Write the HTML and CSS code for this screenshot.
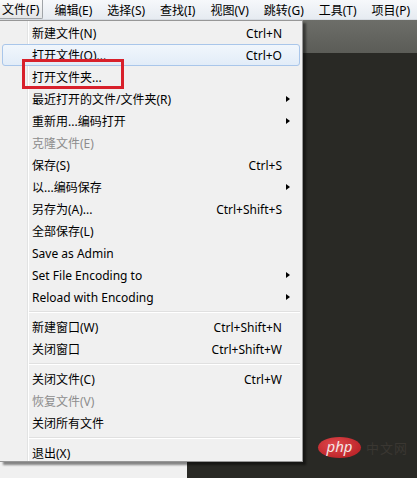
FILE: index.html
```html
<!DOCTYPE html>
<html>
<head>
    <title>文件菜单</title>
    <link rel="stylesheet" href="styles.css">
</head>
<body>
    <div class="menubar">
        <span class="menu-title active">文件(F)</span>
        <span class="menu-title">编辑(E)</span>
        <span class="menu-title">选择(S)</span>
        <span class="menu-title">查找(I)</span>
        <span class="menu-title">视图(V)</span>
        <span class="menu-title">跳转(G)</span>
        <span class="menu-title">工具(T)</span>
        <span class="menu-title">项目(P)</span>
    </div>

    <div class="workspace">
        <div class="sidebar"></div>
        <div class="editor">
            <div class="tabbar"></div>
            <div class="watermark">
                <span class="php-logo">php</span>
                <span class="php-site">中文网</span>
            </div>
        </div>
    </div>

    <div class="dropdown">
        <div class="item"><span class="label">新建文件(N)</span><span class="keys">Ctrl+N</span></div>
        <div class="item hover"><span class="label">打开文件(O)...</span><span class="keys">Ctrl+O</span></div>
        <div class="item"><span class="label">打开文件夹...</span></div>
        <div class="item sub"><span class="label">最近打开的文件/文件夹(R)</span></div>
        <div class="item sub"><span class="label">重新用...编码打开</span></div>
        <div class="item disabled"><span class="label">克隆文件(E)</span></div>
        <div class="item"><span class="label">保存(S)</span><span class="keys">Ctrl+S</span></div>
        <div class="item sub"><span class="label">以...编码保存</span></div>
        <div class="item"><span class="label">另存为(A)...</span><span class="keys">Ctrl+Shift+S</span></div>
        <div class="item"><span class="label">全部保存(L)</span></div>
        <div class="item"><span class="label">Save as Admin</span></div>
        <div class="item sub"><span class="label">Set File Encoding to</span></div>
        <div class="item sub"><span class="label">Reload with Encoding</span></div>
        <div class="separator"></div>
        <div class="item"><span class="label">新建窗口(W)</span><span class="keys">Ctrl+Shift+N</span></div>
        <div class="item"><span class="label">关闭窗口</span><span class="keys">Ctrl+Shift+W</span></div>
        <div class="separator"></div>
        <div class="item"><span class="label">关闭文件(C)</span><span class="keys">Ctrl+W</span></div>
        <div class="item disabled"><span class="label">恢复文件(V)</span></div>
        <div class="item"><span class="label">关闭所有文件</span></div>
        <div class="separator"></div>
        <div class="item"><span class="label">退出(X)</span></div>
    </div>

    <div class="callout"></div>
</body>
</html>
```

FILE: styles.css
```css
body {
    margin: 0;
    width: 417px;
    height: 478px;
    overflow: hidden;
    position: relative;
    font-family: "Noto Sans", "Noto Sans CJK SC", sans-serif;
    font-size: 12px;
    color: #000;
    background-color: #f0f0f0;
}

.menubar {
    height: 20px;
    display: flex;
    align-items: stretch;
    gap: 8px;
    background: linear-gradient(#f6f8fb, #e6ebf1);
    border-bottom: 1px solid #d6dbe2;
    box-sizing: border-box;
}

.menu-title {
    display: flex;
    align-items: center;
    padding: 0 4px 0 3px;
    white-space: nowrap;
}

.menu-title.active {
    background: linear-gradient(#fafafa, #e4e6e8);
    border: 1px solid #a0a4a8;
    border-top: none;
    border-left: none;
    padding: 0 3px 0 2px;
    border-radius: 0 0 2px 0;
}

.workspace {
    display: flex;
    height: 458px;
}

.sidebar {
    width: 187px;
    background-color: #f0f0f0;
}

.editor {
    flex: 1;
    background-color: #292925;
    position: relative;
}

.tabbar {
    height: 33px;
    background: linear-gradient(#6d6e69, #5b5c57);
}

.watermark {
    position: absolute;
    left: 131px;
    top: 417px;
    display: flex;
    align-items: center;
    gap: 5px;
}

.php-logo {
    display: inline-block;
    width: 43px;
    height: 21px;
    line-height: 19px;
    border-radius: 50%;
    background: radial-gradient(ellipse at 40% 35%, #e0484c, #b0191e);
    color: #f4e6e6;
    font-style: italic;
    font-size: 15px;
    text-align: center;
}

.php-site {
    color: #3a3732;
    font-size: 13px;
    letter-spacing: 1px;
}

.dropdown {
    position: absolute;
    left: 0;
    top: 20px;
    width: 303px;
    padding: 1px 0 0;
    height: 442px;
    box-sizing: border-box;
    border: 1px solid #979797;
    border-left: none;
    background: linear-gradient(90deg, #f0f0f0 27px, #e2e3e3 27px, #e2e3e3 28px, #ffffff 28px, #ffffff 29px, #f0f0f0 29px);
    box-shadow: 3px 3px 2px rgba(0, 0, 0, 0.45);
}

.item {
    height: 22px;
    margin: 0 2px;
    padding: 0 18px 0 30px;
    display: flex;
    align-items: center;
    justify-content: space-between;
    position: relative;
    box-sizing: border-box;
    white-space: nowrap;
}

.item.hover {
    background: linear-gradient(#f1f6fc, #e2ecf8);
    border: 1px solid #a9c6ea;
    border-radius: 3px;
    padding-left: 29px;
    padding-right: 17px;
}

.item.disabled {
    color: #8d8d8d;
}

.item.sub::after {
    content: "";
    position: absolute;
    right: 10px;
    top: 8px;
    border-left: 4px solid #000;
    border-top: 3.5px solid transparent;
    border-bottom: 3.5px solid transparent;
}

.separator {
    height: 8px;
    margin-left: 29px;
    margin-right: 2px;
    display: flex;
    flex-direction: column;
    justify-content: center;
}

.separator::before {
    content: "";
    border-top: 1px solid #e0e0e0;
    border-bottom: 1px solid #ffffff;
}

.callout {
    position: absolute;
    left: 22px;
    top: 59px;
    width: 102px;
    height: 30px;
    box-sizing: border-box;
    border: 3px solid #d8202b;
}
```
